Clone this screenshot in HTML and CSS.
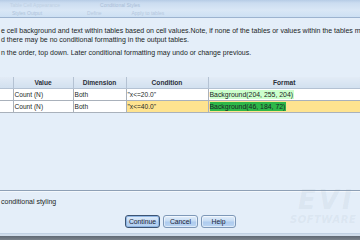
FILE: index.html
```html
<!DOCTYPE html>
<html>
<head>
<meta charset="utf-8">
<link rel="stylesheet" href="styles.css">
</head>
<body>
<div class="dialog">
  <div class="titlebar">
    <div class="tb-row tb-top"><span class="faint w1">Table Cell Appearance</span><span class="faint w2">Conditional Styles</span></div>
    <div class="tb-row tb-bot"><span class="faint w3">Styles Output</span><span class="faint w4">Define</span><span class="faint w5">Apply to tables</span></div>
  </div>
  <div class="content">
    <p class="desc">e cell background and text within tables based on cell values.Note, if none of the tables or values within the tables me<br>d there may be no conditional formatting in the output tables.</p>
    <p class="desc desc2">n the order, top down. Later conditional formatting may undo or change previous.</p>
    <table class="grid">
      <colgroup>
        <col class="c0"><col class="c1"><col class="c2"><col class="c3"><col class="c4">
      </colgroup>
      <thead>
        <tr><th></th><th>Value</th><th>Dimension</th><th>Condition</th><th>Format</th></tr>
      </thead>
      <tbody>
        <tr><td></td><td>Count (N)</td><td>Both</td><td>"x&lt;=20.0"</td><td><span class="fmt fmt-light">Background(204, 255, 204)</span></td></tr>
        <tr><td></td><td>Count (N)</td><td>Both</td><td class="sel">"x&lt;=40.0"</td><td class="sel"><span class="fmt fmt-green">Background(46, 184, 72)</span></td></tr>
      </tbody>
    </table>
  </div>
  <div class="footer">
    <div class="check-label">conditional styling</div>
    <div class="buttons">
      <button class="btn btn-default">Continue</button>
      <button class="btn">Cancel</button>
      <button class="btn">Help</button>
    </div>
  </div>
  <div class="bottom-edge"></div>
  <div class="watermark"><div class="wm-big">EVI</div><div class="wm-small">SOFTWARE</div></div>
</div>
</body>
</html>
```
FILE: styles.css
```css
html, body {
  margin: 0;
  padding: 0;
}
body {
  width: 360px;
  height: 240px;
  overflow: hidden;
  font-family: "Liberation Sans", Arial, sans-serif;
  font-size: 7px;
  color: #1b1f26;
  background: #e4eef9;
}
.dialog {
  position: relative;
  width: 360px;
  height: 240px;
  display: flex;
  flex-direction: column;
  overflow: hidden;
}
.titlebar {
  height: 17px;
  background: linear-gradient(#b6cce6 0px, #cbdcf0 3px, #d9e7f6 10px, #cde0f3 17px);
  border-bottom: 1px solid #9cb3cf;
  display: flex;
  flex-direction: column;
}
.tb-row {
  height: 8px;
  display: flex;
  align-items: center;
  font-size: 5px;
  white-space: nowrap;
}
.faint {
  color: #bfd0e3;
}
.w1 { margin-left: 10px; }
.w2 { margin-left: 40px; color: #a9bdd6; }
.w3 { margin-left: 12px; color: #afc3da; }
.w4 { margin-left: 45px; color: #b7c9de; }
.w5 { margin-left: 30px; color: #b5c8de; }
.tb-top { margin-top: 1px; }
.content {
  flex: 1;
  padding-top: 8px;
  border-bottom: 1px solid #8ea0b6;
  box-shadow: 0 1px 0 #f4f8fc;
}
.desc {
  margin: 0;
  padding-left: 1px;
  line-height: 9px;
  white-space: nowrap;
}
.desc2 {
  margin-top: 4px;
}
.grid {
  margin-top: 20px;
  width: 360px;
  border-collapse: collapse;
  table-layout: fixed;
}
.c0 { width: 13px; }
.c1 { width: 60px; }
.c2 { width: 53px; }
.c3 { width: 82px; }
.c4 { width: 152px; }
.grid th {
  height: 11px;
  padding: 0;
  font-weight: bold;
  font-size: 6.6px;
  color: #2a2f38;
  background: linear-gradient(#e2ebf6, #d2e0ef);
  border: 1px solid #b4c2d3;
  border-top: none;
  text-align: center;
}
.grid th:first-child { border-left: none; }
.grid td {
  height: 11px;
  padding: 0 0 0 1px;
  background: #ffffff;
  border: 1px solid #a9b1bb;
  white-space: nowrap;
  overflow: hidden;
  font-size: 6.6px;
}
.grid td:first-child { border-left: none; }
.grid td:last-child, .grid th:last-child { border-right: none; }
.grid td.sel {
  background: #fee38f;
}
.fmt {
  display: inline-block;
  line-height: 9px;
  padding: 0 1px 0 0;
  font-size: 6.9px;
}
.fmt-light { background: #ccffcc; }
.fmt-green { background: #2eb848; }
.footer {
  height: 42px;
  display: flex;
  flex-direction: column;
}
.check-label {
  margin-top: 6px;
  padding-left: 1px;
  line-height: 9px;
}
.buttons {
  margin-top: 9px;
  display: flex;
  gap: 3px;
  padding-left: 125px;
}
.btn {
  width: 35px;
  height: 13px;
  padding: 0;
  margin: 0;
  font-family: "Liberation Sans", Arial, sans-serif;
  font-size: 6.8px;
  color: #1a2438;
  border: 1px solid #7e98b8;
  border-radius: 3px;
  background: linear-gradient(#e4effb 0%, #c6dcf4 45%, #aecbee 55%, #bcd6f3 100%);
  box-shadow: inset 0 0 0 1px rgba(255,255,255,0.5);
}
.btn-default {
  border-color: #3c5474;
  box-shadow: inset 0 0 0 1px #8fb5e3;
}
.bottom-edge {
  height: 7px;
  background: linear-gradient(#b3c6dc 0px, #cfdcea 1px, #cfdcea 3px, #5f6873 3px, #7b838c 7px);
}
.watermark {
  position: absolute;
  left: 298px;
  top: 188px;
  font-style: italic;
  font-weight: bold;
  color: rgba(140, 155, 170, 0.11);
  pointer-events: none;
}
.wm-big {
  font-family: "DejaVu Sans", sans-serif;
  font-size: 26px;
  line-height: 24px;
  letter-spacing: 3px;
}
.wm-small {
  font-family: "DejaVu Sans", sans-serif;
  font-size: 10px;
  line-height: 12px;
  margin-left: -8px;
  margin-top: 2px;
  letter-spacing: 0.5px;
}
```
